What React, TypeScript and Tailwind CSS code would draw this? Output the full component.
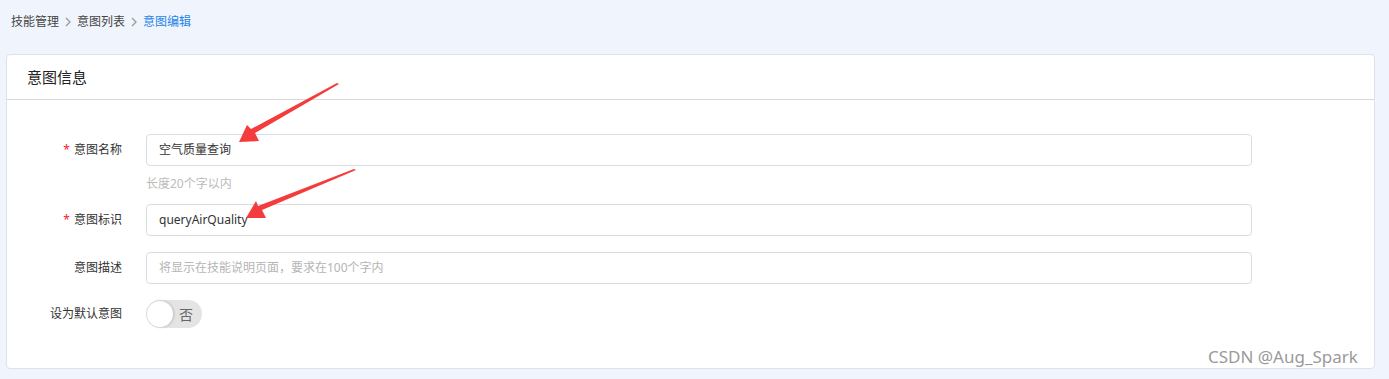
import React from "react";

const font = { fontFamily: '"Noto Sans", "Noto Sans CJK SC", sans-serif' };

function Label({ text, required }: { text: string; required?: boolean }) {
  return (
    <div className="w-[115px] shrink-0 text-right text-[12px] text-[#333] leading-[32px]">
      {required && <span className="text-[#f5222d] mr-[4px]">*</span>}
      {text}
    </div>
  );
}

function Field({ value, placeholder }: { value?: string; placeholder?: string }) {
  return (
    <div className="ml-[24px] w-[1106px] h-[32px] border border-[#d9dde3] rounded-[4px] bg-white flex items-center px-[12px] text-[12px]">
      {value ? (
        <span className="text-[#333]">{value}</span>
      ) : (
        <span className="text-[#b5b5b5]">{placeholder}</span>
      )}
    </div>
  );
}

function Chevron() {
  return (
    <svg className="mx-[6px]" width="6" height="10" viewBox="0 0 6 10">
      <path d="M1 1 L5 5 L1 9" fill="none" stroke="#999" strokeWidth="1.3" />
    </svg>
  );
}

export default function App() {
  return (
    <div className="relative w-[1389px] h-[379px] bg-[#f0f4fc] overflow-hidden" style={font}>
      <div className="flex items-center h-[42px] pl-[11px] pt-[1px] text-[12px] text-[#444]">
        <span>技能管理</span>
        <Chevron />
        <span>意图列表</span>
        <Chevron />
        <span className="text-[#1f86e8]">意图编辑</span>
      </div>

      <div className="ml-[6px] mt-[12px] w-[1369px] h-[315px] bg-white border border-[#dde3ea] rounded-[4px]">
        <div className="h-[45px] border-b border-[#d9d9d9] flex items-center pl-[20px] text-[15px] text-[#222]">
          意图信息
        </div>

        <div className="pt-[34px] flex flex-col">
          <div className="flex items-center">
            <Label text="意图名称" required />
            <Field value="空气质量查询" />
          </div>
          <div className="pl-[139px] pt-[9px] h-[38px] text-[12px] text-[#bbb]">长度20个字以内</div>
          <div className="flex items-center">
            <Label text="意图标识" required />
            <Field value="queryAirQuality" />
          </div>
          <div className="flex items-center mt-[16px]">
            <Label text="意图描述" />
            <Field placeholder="将显示在技能说明页面，要求在100个字内" />
          </div>
          <div className="flex items-center mt-[14px]">
            <Label text="设为默认意图" />
            <div className="ml-[24px] relative w-[56px] h-[28px] rounded-full bg-[#e4e4e4] flex items-center">
              <div className="absolute left-[1px] top-[1px] w-[26px] h-[26px] rounded-full bg-white shadow-[1px_0_3px_rgba(0,0,0,0.18)]" />
              <span className="ml-[33px] text-[14px] text-[#666]">否</span>
            </div>
          </div>
        </div>
      </div>

      <svg className="absolute left-0 top-0 pointer-events-none" width="1389" height="379">
        <polygon points="339,84 255,133 259,141 239,142 247,125 251,129 337,83" fill="#f53c3c" />
        <polygon points="356,170 262,210 266,218 246,218 256,201 258,206 354,169" fill="#f53c3c" />
      </svg>

      <div className="absolute left-[1208px] top-[346px] text-[17px] text-[#9a9a9a] leading-[22px] [text-shadow:0_0_2px_#fff]">
        CSDN @Aug_Spark
      </div>
    </div>
  );
}
